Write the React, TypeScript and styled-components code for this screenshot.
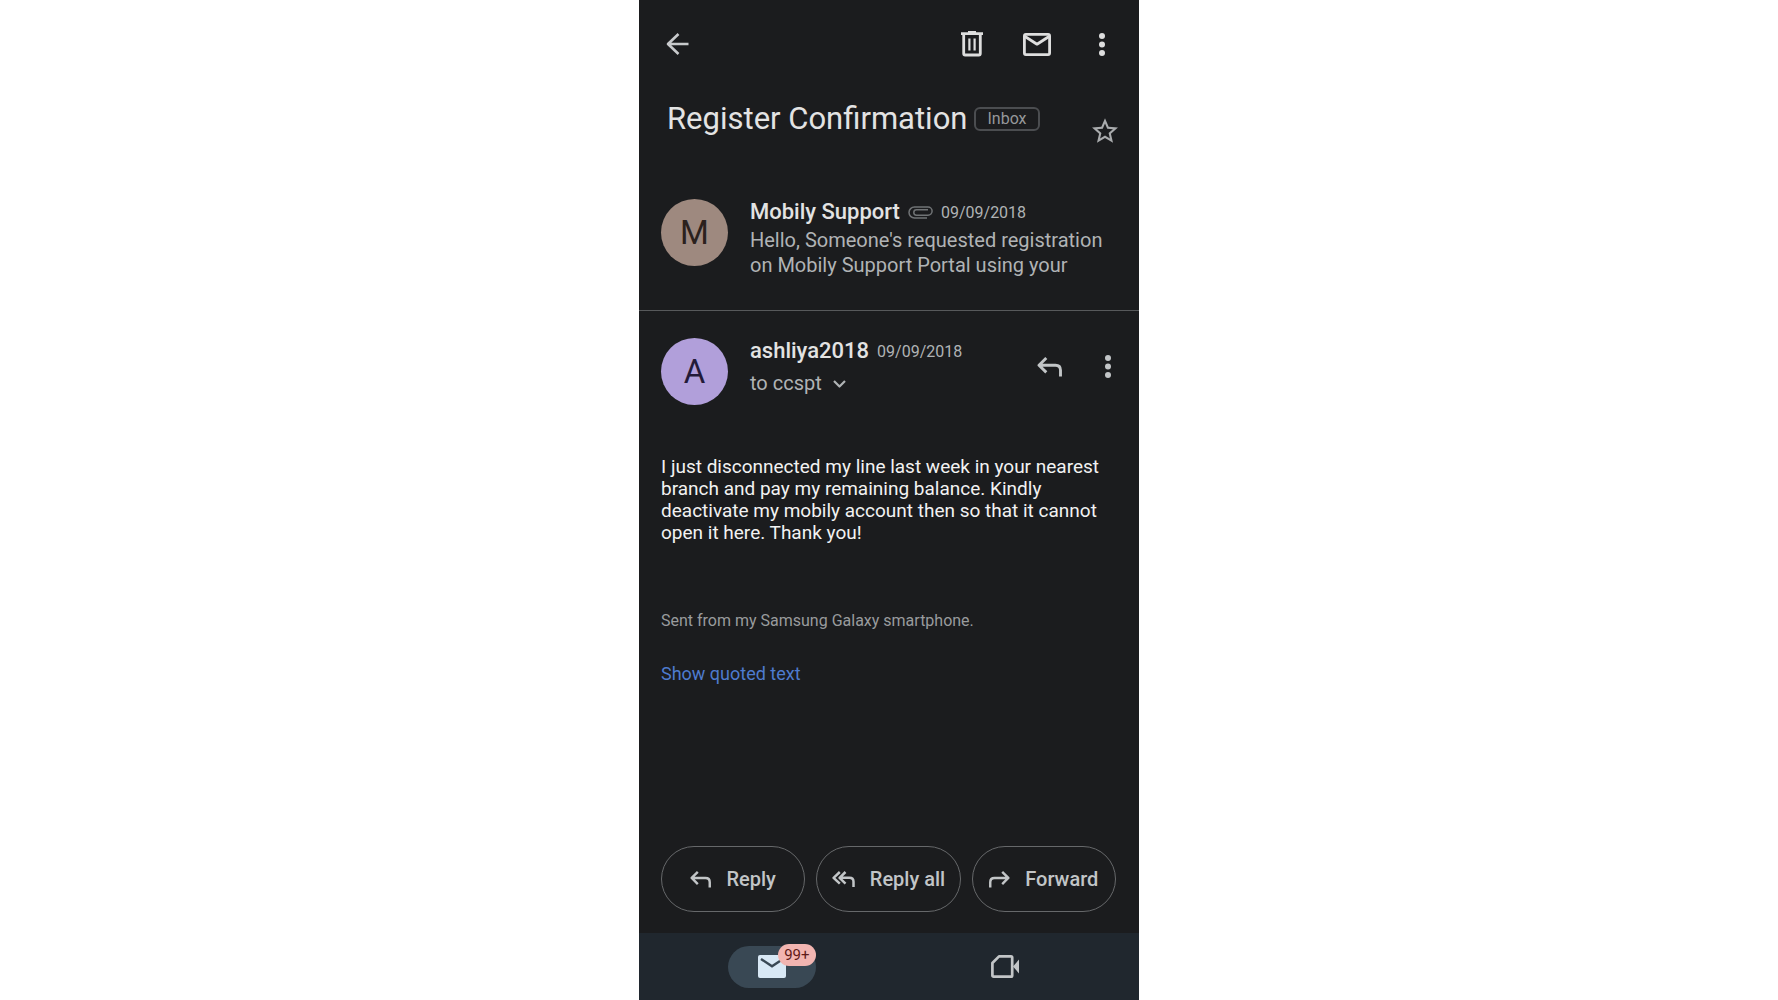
import React from "react";
import styled, { createGlobalStyle } from "styled-components";

const GlobalStyle = createGlobalStyle`
  *, *::before, *::after { box-sizing: border-box; }
  body { margin: 0; background: #fff; }
  button { font: inherit; color: inherit; background: none; border: 0; padding: 0; cursor: pointer; }
  svg { display: block; flex: none; }
`;

const Screen = styled.div`
  display: flex;
  flex-direction: column;
  width: 100%;
  max-width: 500px;
  min-height: 100vh;
  margin: 0 auto;
  background: #1b1c1e;
  color: #e3e3e3;
  font-family: Roboto, "Liberation Sans", sans-serif;
`;

const Toolbar = styled.header`
  display: flex;
  align-items: center;
  justify-content: space-between;
  height: 88px;
  padding: 0 5px 0 6px;
`;

const ToolbarActions = styled.div`
  display: flex;
  align-items: center;
`;

const IconButton = styled.button<{ $tone?: string; $wide?: boolean }>`
  display: grid;
  place-items: center;
  width: ${(p) => (p.$wide ? "65px" : "auto")};
  height: ${(p) => (p.$wide ? "48px" : "auto")};
  color: ${(p) => p.$tone ?? "#dedede"};
`;

const SubjectRow = styled.section`
  display: flex;
  align-items: center;
  justify-content: space-between;
  height: 84px;
  padding: 0 21px 0 28px;
`;

const SubjectLine = styled.div`
  display: flex;
  align-items: center;
  align-self: flex-start;
  gap: 7px;
  padding-top: 13px;
`;

const Subject = styled.h1`
  margin: 0;
  font-size: 31px;
  line-height: 36px;
  font-weight: 400;
`;

const FolderChip = styled.span`
  padding: 0 11px;
  border: 2px solid #4b4d50;
  border-radius: 6px;
  color: #96989a;
  font-size: 16px;
  line-height: 20px;
`;

const Message = styled.article<{ $divided?: boolean }>`
  display: flex;
  align-items: flex-start;
  padding: 27px 22px ${(p) => (p.$divided ? 32 : 0)}px;
  border-bottom: ${(p) => (p.$divided ? "1px solid #57595b" : "0")};
`;

const Avatar = styled.div<{ $fill: string; $ink: string }>`
  display: grid;
  place-items: center;
  flex: none;
  width: 67px;
  height: 67px;
  margin-right: 22px;
  border-radius: 50%;
  background: ${(p) => p.$fill};
  color: ${(p) => p.$ink};
  font-size: 33px;
`;

const MessageText = styled.div`
  flex: 1;
  min-width: 0;
`;

const NameRow = styled.div`
  display: flex;
  align-items: center;
  gap: 8px;
  padding-top: 1px;
  color: #b0b3b5;
`;

const Sender = styled.strong`
  color: #e3e3e3;
  font-size: 22px;
  line-height: 24px;
  font-weight: 500;
`;

const DateText = styled.time`
  padding-top: 2px;
  font-size: 16px;
  line-height: 22px;
`;

const Snippet = styled.p`
  margin: 4px 0 0;
  color: #b0b3b5;
  font-size: 20px;
  line-height: 25px;
`;

const Recipient = styled.button`
  display: flex;
  align-items: center;
  gap: 11px;
  margin-top: 8px;
  color: #b0b3b5;
  font-size: 20px;
  line-height: 25px;
`;

const MessageActions = styled.div`
  display: flex;
  align-items: center;
  gap: 43px;
  height: 57px;
  padding-right: 6px;
`;

const Body = styled.section`
  display: flex;
  flex-direction: column;
  align-items: flex-start;
  padding: 51px 22px 0;
`;

const Paragraph = styled.p`
  margin: 0;
  color: #f2f2f2;
  font-size: 19px;
  line-height: 22px;
`;

const Signature = styled.p`
  margin: 67px 0 0;
  color: #999b9d;
  font-size: 16px;
  line-height: 20px;
`;

const QuotedToggle = styled.button`
  margin-top: 32px;
  color: #4e7bce;
  font-size: 18px;
  line-height: 22px;
`;

const ReplyBar = styled.div`
  display: grid;
  grid-template-columns: repeat(3, 1fr);
  gap: 11px;
  margin-top: auto;
  padding: 32px 23px 21px 22px;
`;

const PillButton = styled.button`
  display: flex;
  align-items: center;
  justify-content: center;
  gap: 15px;
  height: 66px;
  border: 1px solid #66686a;
  border-radius: 33px;
  color: #c2c5c7;
  font-size: 20px;
  font-weight: 500;
  white-space: nowrap;
`;

const BottomNav = styled.nav`
  display: grid;
  grid-template-columns: 1fr 1fr;
  place-items: center;
  height: 67px;
  padding: 0 18px 0 16px;
  background: #20272e;
`;

const NavButton = styled.button<{ $active?: boolean }>`
  position: relative;
  display: grid;
  place-items: center;
  width: 88px;
  height: 42px;
  border-radius: 21px;
  background: ${(p) => (p.$active ? "#394854" : "transparent")};
  color: ${(p) => (p.$active ? "#d8e8f5" : "#c2c5c7")};
`;

const Badge = styled.span`
  position: absolute;
  top: -2px;
  right: 0;
  padding: 0 6px;
  border-radius: 11px;
  background: #f2b5b1;
  color: #601a18;
  font-size: 15px;
  line-height: 22px;
`;

const stroke = { fill: "none", stroke: "currentColor", strokeLinejoin: "round" as const };

const BackIcon = () => (
  <svg width="23" height="22" viewBox="0 0 23 22" {...stroke} strokeWidth="2.6">
    <path d="M22.5 11H2M12.5 1L2 11l10.5 10" />
  </svg>
);

const TrashIcon = () => (
  <svg width="22" height="26" viewBox="0 0 22 26" {...stroke} strokeWidth="2.8">
    <path d="M0 2.6h22M7 1.4h8M2.700 3v19.500q0 1.500 1.500 1.500h13.600q1.500 0 1.500-1.500V3" />
    <path d="M8.400 7.500v12M13.600 7.500v12" strokeWidth="2.200" />
  </svg>
);

const MailIcon = () => (
  <svg width="28" height="23" viewBox="0 0 28 23" {...stroke} strokeWidth="2.8">
    <rect x="1.4" y="1.4" width="25.2" height="20.2" rx="1.5" />
    <path d="M2 3.500l12 7.700 12-7.700" />
  </svg>
);

const DotsIcon = () => (
  <svg width="6" height="23" viewBox="0 0 6 23" fill="currentColor">
    <circle cx="3" cy="3" r="3" />
    <circle cx="3" cy="11.5" r="3" />
    <circle cx="3" cy="20" r="3" />
  </svg>
);

const StarIcon = () => (
  <svg width="26" height="25" viewBox="2 2 20 19" fill="currentColor">
    <path d="M22 9.240l-7.190-.62L12 2 9.190 8.630 2 9.240l5.460 4.730L5.820 21 12 17.270 18.180 21l-1.630-7.030L22 9.240zM12 15.400l-3.760 2.270 1-4.280-3.320-2.880 4.380-.38L12 6.100l1.710 4.040 4.380.38-3.320 2.880 1 4.280L12 15.400z" />
  </svg>
);

const ClipIcon = () => (
  <svg width="25" height="13" viewBox="0 0 25 13" {...stroke} strokeWidth="1.5">
    <path d="M19.500 9.200H8.500a2.700 2.700 0 0 1 0-5.400H20M19 12H6.500a5.500 5.500 0 0 1 0-11H20a4.100 4.100 0 0 1 0 8.200h-2" />
  </svg>
);

const ChevronIcon = () => (
  <svg width="13" height="8" viewBox="0 0 13 8" {...stroke} strokeWidth="2.200">
    <path d="M1 1l5.500 5.500L12 1" />
  </svg>
);

const ReplyIcon = ({ size = 25 }: { size?: number }) => (
  <svg width={size} height={Math.round(size * 0.8)} viewBox="0 0 25 20" {...stroke} strokeWidth="2.900">
    <path d="M9.300 1L2 8.200l7.300 7.200M2 8.200h16.500q5 0 5 5V19.500" />
  </svg>
);

const ReplyAllIcon = () => (
  <svg width="23" height="16" viewBox="0 0 23 16" {...stroke} strokeWidth="2.500">
    <path d="M7.800 1L1.600 6.800l6.200 5.800M13.500 1L7.600 6.800l5.900 5.800M7.600 6.800H17.500q4 0 4 4V16" />
  </svg>
);

const ForwardIcon = () => (
  <svg width="21" height="17" viewBox="0 0 25 20" {...stroke} strokeWidth="2.900">
    <path d="M15.700 1L23 8.200l-7.300 7.200M23 8.200H6.500q-5 0-5 5V19.500" />
  </svg>
);

const InboxIcon = () => (
  <svg width="28" height="23" viewBox="0 0 28 23">
    <rect width="28" height="23" rx="2" fill="currentColor" />
    <path d="M3 4l11 7.200L25 4" fill="none" stroke="#394854" strokeWidth="2.400" />
  </svg>
);

const VideoIcon = () => (
  <svg width="28" height="23" viewBox="0 0 28 23" {...stroke} strokeWidth="2.700">
    <path d="M8 1.400h12q1.200 0 1.200 1.200v17.800q0 1.200-1.200 1.200H2.600q-1.200 0-1.200-1.200V8z" />
    <path d="M22 11.500L28 4.500v14z" fill="currentColor" stroke="none" />
  </svg>
);

export default function App() {
  return (
    <>
      <GlobalStyle />
      <Screen>
        <Toolbar>
          <IconButton $wide aria-label="Back" $tone="#c8cacc"><BackIcon /></IconButton>
          <ToolbarActions>
            <IconButton $wide aria-label="Delete"><TrashIcon /></IconButton>
            <IconButton $wide aria-label="Mark as unread"><MailIcon /></IconButton>
            <IconButton $wide aria-label="More options"><DotsIcon /></IconButton>
          </ToolbarActions>
        </Toolbar>

        <SubjectRow>
          <SubjectLine>
            <Subject>Register Confirmation</Subject>
            <FolderChip>Inbox</FolderChip>
          </SubjectLine>
          <IconButton aria-label="Star" $tone="#a9abad"><StarIcon /></IconButton>
        </SubjectRow>

        <Message $divided>
          <Avatar $fill="#9e897f" $ink="#2b211d">M</Avatar>
          <MessageText>
            <NameRow>
              <Sender>Mobily Support</Sender>
              <IconButton as="span" $tone="#707375"><ClipIcon /></IconButton>
              <DateText>09/09/2018</DateText>
            </NameRow>
            <Snippet>Hello, Someone's requested registration on Mobily Support Portal using your</Snippet>
          </MessageText>
        </Message>

        <Message>
          <Avatar $fill="#b19fda" $ink="#231a38">A</Avatar>
          <MessageText>
            <NameRow>
              <Sender>ashliya2018</Sender>
              <DateText>09/09/2018</DateText>
            </NameRow>
            <Recipient>to ccspt <ChevronIcon /></Recipient>
          </MessageText>
          <MessageActions>
            <IconButton aria-label="Reply" $tone="#c2c5c7"><ReplyIcon /></IconButton>
            <IconButton aria-label="Message options" $tone="#c2c5c7"><DotsIcon /></IconButton>
          </MessageActions>
        </Message>

        <Body>
          <Paragraph>
            I just disconnected my line last week in your nearest branch and pay my remaining balance. Kindly
            deactivate my mobily account then so that it cannot open it here. Thank you!
          </Paragraph>
          <Signature>Sent from my Samsung Galaxy smartphone.</Signature>
          <QuotedToggle>Show quoted text</QuotedToggle>
        </Body>

        <ReplyBar>
          <PillButton><ReplyIcon size={21} />Reply</PillButton>
          <PillButton><ReplyAllIcon />Reply all</PillButton>
          <PillButton><ForwardIcon />Forward</PillButton>
        </ReplyBar>

        <BottomNav>
          <NavButton $active aria-label="Mail, 99+ unread"><InboxIcon /><Badge>99+</Badge></NavButton>
          <NavButton aria-label="Meet"><VideoIcon /></NavButton>
        </BottomNav>
      </Screen>
    </>
  );
}
